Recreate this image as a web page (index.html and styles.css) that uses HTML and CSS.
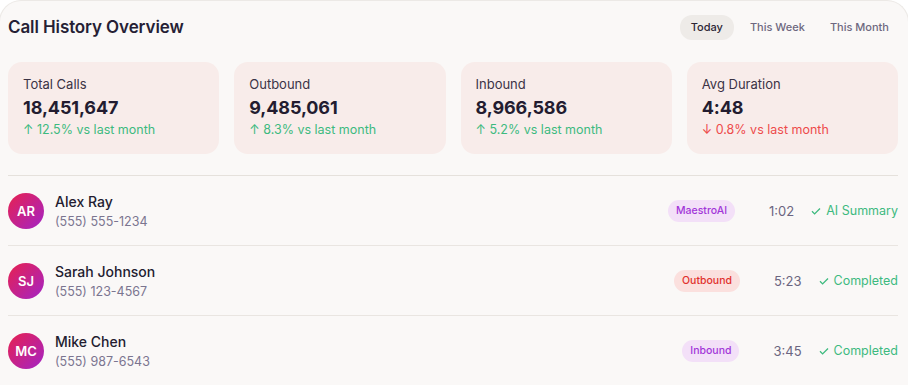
FILE: index.html
```html
<!DOCTYPE html>
<html>
<head>
<title>Call History Overview</title>
<link rel="stylesheet" href="styles.css">
</head>
<body>

<div class="panel">
  <div class="header">
    <h2 class="title">Call History Overview</h2>
    <div class="tabs">
      <span class="tab active">Today</span>
      <span class="tab">This Week</span>
      <span class="tab">This Month</span>
    </div>
  </div>

  <div class="stats">
    <div class="stat">
      <div class="stat-label">Total Calls</div>
      <div class="stat-value">18,451,647</div>
      <div class="stat-change up">&#8593; 12.5% vs last month</div>
    </div>
    <div class="stat">
      <div class="stat-label">Outbound</div>
      <div class="stat-value">9,485,061</div>
      <div class="stat-change up">&#8593; 8.3% vs last month</div>
    </div>
    <div class="stat">
      <div class="stat-label">Inbound</div>
      <div class="stat-value">8,966,586</div>
      <div class="stat-change up">&#8593; 5.2% vs last month</div>
    </div>
    <div class="stat">
      <div class="stat-label">Avg Duration</div>
      <div class="stat-value">4:48</div>
      <div class="stat-change down">&#8595; 0.8% vs last month</div>
    </div>
  </div>

  <div class="calls">
    <div class="call">
      <div class="avatar">AR</div>
      <div class="who">
        <div class="name">Alex Ray</div>
        <div class="phone">(555) 555-1234</div>
      </div>
      <span class="badge maestro">MaestroAI</span>
      <span class="duration">1:02</span>
      <span class="status"><svg width="12" height="12" viewBox="0 0 12 12"><path d="M2 6.3l2.6 2.6L10 3.5" fill="none" stroke="currentColor" stroke-width="1.3"/></svg>AI Summary</span>
    </div>
    <div class="call">
      <div class="avatar">SJ</div>
      <div class="who">
        <div class="name">Sarah Johnson</div>
        <div class="phone">(555) 123-4567</div>
      </div>
      <span class="badge outbound">Outbound</span>
      <span class="duration">5:23</span>
      <span class="status"><svg width="12" height="12" viewBox="0 0 12 12"><path d="M2 6.3l2.6 2.6L10 3.5" fill="none" stroke="currentColor" stroke-width="1.3"/></svg>Completed</span>
    </div>
    <div class="call">
      <div class="avatar">MC</div>
      <div class="who">
        <div class="name">Mike Chen</div>
        <div class="phone">(555) 987-6543</div>
      </div>
      <span class="badge inbound">Inbound</span>
      <span class="duration">3:45</span>
      <span class="status"><svg width="12" height="12" viewBox="0 0 12 12"><path d="M2 6.3l2.6 2.6L10 3.5" fill="none" stroke="currentColor" stroke-width="1.3"/></svg>Completed</span>
    </div>
  </div>
</div>

</body>
</html>
```

FILE: styles.css
```css
body {
  margin: 0;
  background-color: #ffffff;
  font-family: Inter, "Open Sans", sans-serif;
  color: #2a2238;
}
.panel {
  height: 385px;
  padding: 0 10px 0 8px;
  border: 1px solid #ece9e6;
  border-bottom: none;
  border-radius: 22px 22px 0 0;
  margin: 0 -1px;
  background-color: #faf8f7;
  overflow: hidden;
}
.header {
  display: flex;
  align-items: center;
  justify-content: space-between;
  height: 50px;
  margin-top: 1px;
}
.title {
  margin: 0;
  font-size: 17px;
  font-weight: 600;
  letter-spacing: -0.1px;
  color: #261f35;
}
.tabs {
  display: flex;
  gap: 2px;
}
.tab {
  padding: 5px 9px 6px;
  border-radius: 12px;
  font-size: 11px;
  font-weight: 500;
  color: #6e6880;
}
.tab.active {
  background-color: #eeebe8;
  color: #2c2535;
  padding: 5px 11px 6px;
}
.tab + .tab {
  margin-left: 5px;
}
.stats {
  display: grid;
  grid-template-columns: repeat(4, 1fr);
  gap: 15px;
  margin-top: 10px;
}
.stat {
  height: 92px;
  box-sizing: border-box;
  padding: 14px 15px 0;
  border-radius: 14px;
  background-color: #f8ecea;
}
.stat-label {
  font-size: 13px;
  color: #3b3346;
}
.stat-value {
  margin-top: 5px;
  font-size: 18px;
  font-weight: 700;
  letter-spacing: -0.1px;
  color: #231c30;
}
.stat-change {
  margin-top: 4px;
  font-size: 12.5px;
}
.stat-change.up {
  color: #3dba7f;
}
.stat-change.down {
  color: #ee4b4b;
}
.calls {
  margin-top: 21px;
  border-top: 1px solid #e5e1dc;
}
.call {
  display: flex;
  align-items: center;
  height: 69px;
  border-bottom: 1px solid #e9e5e1;
}
.avatar {
  width: 36px;
  height: 36px;
  border-radius: 50%;
  background: linear-gradient(135deg, #e8214f, #a323c7);
  color: #ffffff;
  font-size: 13px;
  font-weight: 600;
  display: flex;
  align-items: center;
  justify-content: center;
  margin-right: 11px;
}
.who {
  flex: 1;
}
.name {
  font-size: 14px;
  font-weight: 500;
  color: #231c30;
}
.phone {
  margin-top: 4px;
  font-size: 12.5px;
  color: #7b7590;
}
.badge {
  padding: 4px 8px 5px;
  border-radius: 11px;
  font-size: 10.5px;
  font-weight: 500;
}
.badge.maestro {
  background-color: #f3e0f8;
  color: #a236d8;
}
.badge.outbound {
  background-color: #fbe0de;
  color: #e1302c;
}
.badge.inbound {
  background-color: #f3e0f8;
  color: #a236d8;
}
.duration {
  margin-left: 34px;
  font-size: 13px;
  color: #6b6580;
}
.status {
  display: flex;
  align-items: center;
  gap: 4px;
  margin-left: 16px;
  font-size: 12.5px;
  color: #3dba7f;
}
```
